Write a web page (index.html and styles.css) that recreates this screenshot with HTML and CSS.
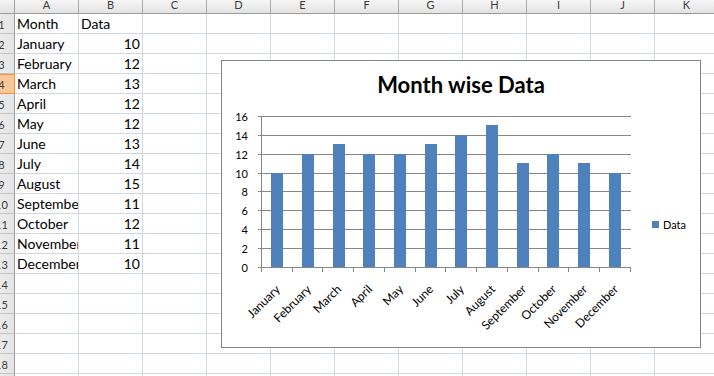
FILE: index.html
```html
<!DOCTYPE html>
<html>
<head>
<meta charset="utf-8">
<link rel="stylesheet" href="styles.css">
</head>
<body>
<div class="sheet">
  <div class="corner"></div>
  <div class="ch">A</div><div class="ch">B</div><div class="ch">C</div><div class="ch">D</div><div class="ch">E</div><div class="ch">F</div><div class="ch">G</div><div class="ch">H</div><div class="ch">I</div><div class="ch">J</div><div class="ch">K</div>

  <div class="rh">1</div><div class="c">Month</div><div class="c">Data</div><div class="c"></div><div class="c"></div><div class="c"></div><div class="c"></div><div class="c"></div><div class="c"></div><div class="c"></div><div class="c"></div><div class="c"></div>
  <div class="rh">2</div><div class="c">January</div><div class="c n">10</div><div class="c"></div><div class="c"></div><div class="c"></div><div class="c"></div><div class="c"></div><div class="c"></div><div class="c"></div><div class="c"></div><div class="c"></div>
  <div class="rh">3</div><div class="c">February</div><div class="c n">12</div><div class="c"></div><div class="c"></div><div class="c"></div><div class="c"></div><div class="c"></div><div class="c"></div><div class="c"></div><div class="c"></div><div class="c"></div>
  <div class="rh sel">4</div><div class="c">March</div><div class="c n">13</div><div class="c"></div><div class="c"></div><div class="c"></div><div class="c"></div><div class="c"></div><div class="c"></div><div class="c"></div><div class="c"></div><div class="c"></div>
  <div class="rh">5</div><div class="c">April</div><div class="c n">12</div><div class="c"></div><div class="c"></div><div class="c"></div><div class="c"></div><div class="c"></div><div class="c"></div><div class="c"></div><div class="c"></div><div class="c"></div>
  <div class="rh">6</div><div class="c">May</div><div class="c n">12</div><div class="c"></div><div class="c"></div><div class="c"></div><div class="c"></div><div class="c"></div><div class="c"></div><div class="c"></div><div class="c"></div><div class="c"></div>
  <div class="rh">7</div><div class="c">June</div><div class="c n">13</div><div class="c"></div><div class="c"></div><div class="c"></div><div class="c"></div><div class="c"></div><div class="c"></div><div class="c"></div><div class="c"></div><div class="c"></div>
  <div class="rh">8</div><div class="c">July</div><div class="c n">14</div><div class="c"></div><div class="c"></div><div class="c"></div><div class="c"></div><div class="c"></div><div class="c"></div><div class="c"></div><div class="c"></div><div class="c"></div>
  <div class="rh">9</div><div class="c">August</div><div class="c n">15</div><div class="c"></div><div class="c"></div><div class="c"></div><div class="c"></div><div class="c"></div><div class="c"></div><div class="c"></div><div class="c"></div><div class="c"></div>
  <div class="rh">10</div><div class="c">September</div><div class="c n">11</div><div class="c"></div><div class="c"></div><div class="c"></div><div class="c"></div><div class="c"></div><div class="c"></div><div class="c"></div><div class="c"></div><div class="c"></div>
  <div class="rh">11</div><div class="c">October</div><div class="c n">12</div><div class="c"></div><div class="c"></div><div class="c"></div><div class="c"></div><div class="c"></div><div class="c"></div><div class="c"></div><div class="c"></div><div class="c"></div>
  <div class="rh">12</div><div class="c">November</div><div class="c n">11</div><div class="c"></div><div class="c"></div><div class="c"></div><div class="c"></div><div class="c"></div><div class="c"></div><div class="c"></div><div class="c"></div><div class="c"></div>
  <div class="rh">13</div><div class="c">December</div><div class="c n">10</div><div class="c"></div><div class="c"></div><div class="c"></div><div class="c"></div><div class="c"></div><div class="c"></div><div class="c"></div><div class="c"></div><div class="c"></div>
  <div class="rh">14</div><div class="c"></div><div class="c"></div><div class="c"></div><div class="c"></div><div class="c"></div><div class="c"></div><div class="c"></div><div class="c"></div><div class="c"></div><div class="c"></div><div class="c"></div>
  <div class="rh">15</div><div class="c"></div><div class="c"></div><div class="c"></div><div class="c"></div><div class="c"></div><div class="c"></div><div class="c"></div><div class="c"></div><div class="c"></div><div class="c"></div><div class="c"></div>
  <div class="rh">16</div><div class="c"></div><div class="c"></div><div class="c"></div><div class="c"></div><div class="c"></div><div class="c"></div><div class="c"></div><div class="c"></div><div class="c"></div><div class="c"></div><div class="c"></div>
  <div class="rh">17</div><div class="c"></div><div class="c"></div><div class="c"></div><div class="c"></div><div class="c"></div><div class="c"></div><div class="c"></div><div class="c"></div><div class="c"></div><div class="c"></div><div class="c"></div>
  <div class="rh">18</div><div class="c"></div><div class="c"></div><div class="c"></div><div class="c"></div><div class="c"></div><div class="c"></div><div class="c"></div><div class="c"></div><div class="c"></div><div class="c"></div><div class="c"></div>
  <div class="rh">19</div><div class="c"></div><div class="c"></div><div class="c"></div><div class="c"></div><div class="c"></div><div class="c"></div><div class="c"></div><div class="c"></div><div class="c"></div><div class="c"></div><div class="c"></div>
</div>

<div class="chart">
  <svg class="chart-svg" width="480" height="288" viewBox="221 60 480 288" xmlns="http://www.w3.org/2000/svg">
    <rect x="221.5" y="60.5" width="479" height="287" fill="#ffffff" stroke="#868686" stroke-width="1"/>
    <text class="title" x="461" y="93" text-anchor="middle">Month wise Data</text>

    <g stroke="#868686" stroke-width="1" shape-rendering="crispEdges">
      <line x1="258" y1="116.5" x2="631" y2="116.5"/>
      <line x1="258" y1="135.5" x2="631" y2="135.5"/>
      <line x1="258" y1="154.5" x2="631" y2="154.5"/>
      <line x1="258" y1="173.5" x2="631" y2="173.5"/>
      <line x1="258" y1="191.5" x2="631" y2="191.5"/>
      <line x1="258" y1="210.5" x2="631" y2="210.5"/>
      <line x1="258" y1="229.5" x2="631" y2="229.5"/>
      <line x1="258" y1="248.5" x2="631" y2="248.5"/>
    </g>

    <g fill="#4f81bd" shape-rendering="crispEdges">
      <rect x="271" y="173" width="12" height="94"/>
      <rect x="302" y="154" width="12" height="113"/>
      <rect x="333" y="144" width="12" height="123"/>
      <rect x="363" y="154" width="12" height="113"/>
      <rect x="394" y="154" width="12" height="113"/>
      <rect x="425" y="144" width="12" height="123"/>
      <rect x="455" y="135" width="12" height="132"/>
      <rect x="486" y="125" width="12" height="142"/>
      <rect x="517" y="163" width="12" height="104"/>
      <rect x="547" y="154" width="12" height="113"/>
      <rect x="578" y="163" width="12" height="104"/>
      <rect x="609" y="173" width="12" height="94"/>
    </g>

    <g stroke="#868686" stroke-width="1" shape-rendering="crispEdges">
      <line x1="261.5" y1="116" x2="261.5" y2="268"/>
      <line x1="258" y1="267.5" x2="631" y2="267.5"/>
      <line x1="261.5" y1="267" x2="261.5" y2="272"/>
      <line x1="292.5" y1="267" x2="292.5" y2="272"/>
      <line x1="322.5" y1="267" x2="322.5" y2="272"/>
      <line x1="353.5" y1="267" x2="353.5" y2="272"/>
      <line x1="384.5" y1="267" x2="384.5" y2="272"/>
      <line x1="415.5" y1="267" x2="415.5" y2="272"/>
      <line x1="445.5" y1="267" x2="445.5" y2="272"/>
      <line x1="476.5" y1="267" x2="476.5" y2="272"/>
      <line x1="507.5" y1="267" x2="507.5" y2="272"/>
      <line x1="538.5" y1="267" x2="538.5" y2="272"/>
      <line x1="568.5" y1="267" x2="568.5" y2="272"/>
      <line x1="599.5" y1="267" x2="599.5" y2="272"/>
      <line x1="630.5" y1="267" x2="630.5" y2="272"/>
    </g>

    <g class="axis-label" text-anchor="end">
      <text x="248" y="120.5">16</text>
      <text x="248" y="139.5">14</text>
      <text x="248" y="158.5">12</text>
      <text x="248" y="177.5">10</text>
      <text x="248" y="195.5">8</text>
      <text x="248" y="214.5">6</text>
      <text x="248" y="233.5">4</text>
      <text x="248" y="252.5">2</text>
      <text x="248" y="271.5">0</text>
    </g>

    <g class="cat-label" text-anchor="end">
      <text transform="translate(281 290) rotate(-45)">January</text>
      <text transform="translate(312 290) rotate(-45)">February</text>
      <text transform="translate(342 290) rotate(-45)">March</text>
      <text transform="translate(373 290) rotate(-45)">April</text>
      <text transform="translate(404 290) rotate(-45)">May</text>
      <text transform="translate(434 290) rotate(-45)">June</text>
      <text transform="translate(465 290) rotate(-45)">July</text>
      <text transform="translate(496 290) rotate(-45)">August</text>
      <text transform="translate(527 290) rotate(-45)">September</text>
      <text transform="translate(557 290) rotate(-45)">October</text>
      <text transform="translate(588 290) rotate(-45)">November</text>
      <text transform="translate(619 290) rotate(-45)">December</text>
    </g>

    <rect x="652" y="221" width="7" height="7" fill="#4f81bd"/>
    <text class="axis-label" x="663" y="229">Data</text>
  </svg>
</div>
</body>
</html>
```

FILE: styles.css
```css
html, body {
  margin: 0;
  padding: 0;
  background: #ffffff;
  overflow: hidden;
}

body {
  width: 714px;
  height: 376px;
  position: relative;
  font-family: Lato, "Liberation Sans", sans-serif;
}

.sheet {
  display: grid;
  grid-template-columns: 26px repeat(11, 64px);
  grid-template-rows: 14px repeat(19, 20px);
  margin-left: -11px;
}

.sheet > div {
  box-sizing: border-box;
  white-space: nowrap;
}

.corner {
  background: linear-gradient(#f4f4f4, #e2e2e2);
  border-right: 1px solid #9e9e9e;
  border-bottom: 1px solid #9e9e9e;
}

.ch {
  background: linear-gradient(#f6f6f6, #e3e3e3);
  border-right: 1px solid #acacac;
  border-bottom: 1px solid #9a9a9a;
  font-size: 11px;
  line-height: 10px;
  text-align: center;
  color: #3c3c3c;
}

.rh {
  background: linear-gradient(90deg, #f1f1f1, #e4e4e4);
  border-right: 1px solid #9e9e9e;
  border-bottom: 1px solid #c4c4c4;
  font-size: 11px;
  line-height: 19px;
  padding-top: 1px;
  text-align: center;
  color: #3c3c3c;
  overflow: hidden;
}

.rh.sel {
  background: #f8c898;
  border-right-color: #f29436;
  border-bottom-color: #f29436;
  box-shadow: inset 0 1px 0 #f29436;
}

.c {
  border-right: 1px solid #d0d7e5;
  border-bottom: 1px solid #d0d7e5;
  font-size: 14px;
  line-height: 19px;
  padding: 0 2px;
  color: #000000;
  overflow: hidden;
}

.c.n {
  text-align: right;
}

.chart {
  position: absolute;
  left: 221px;
  top: 60px;
  width: 480px;
  height: 288px;
}

.chart-svg {
  display: block;
}

.title {
  font-family: Lato, "Liberation Sans", sans-serif;
  font-weight: 700;
  font-size: 22px;
  fill: #000000;
}

.axis-label {
  font-family: Lato, "Liberation Sans", sans-serif;
  font-size: 11px;
  fill: #000000;
}

.cat-label {
  font-family: Lato, "Liberation Sans", sans-serif;
  font-size: 12px;
  fill: #000000;
}
```
